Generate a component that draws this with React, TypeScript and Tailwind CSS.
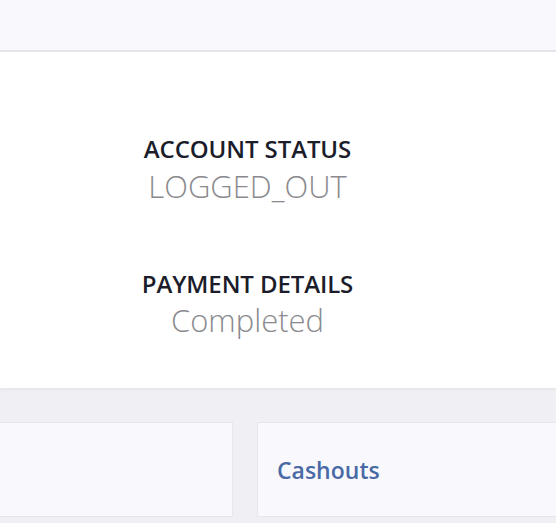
import React from 'react';

const StatusItem: React.FC<{ label: string; value: string; gap: string }> = ({ label, value, gap }) => (
  <div className={`flex flex-col items-center ${gap}`}>
    <h3 className="text-[24px] leading-[24px] font-semibold text-[#1b1d2a] tracking-[-0.1px]">{label}</h3>
    <p className="text-[31px] leading-[30px] font-light text-[#8a8a8e]">{value}</p>
  </div>
);

const App: React.FC = () => {
  return (
    <div className="min-h-screen bg-[#efeff4] font-['Open_Sans',sans-serif] overflow-hidden">
      {/* Top bar */}
      <div className="h-[52px] bg-[#f9f9fd] border-b-2 border-[#e4e4ea]"></div>

      {/* Account panel */}
      <div className="bg-white h-[336px] pr-[61px] pt-[85px] flex flex-col gap-[71px] shadow-[0_2px_3px_rgba(0,0,0,0.04)]">
        <StatusItem label="ACCOUNT STATUS" value="LOGGED_OUT" gap="gap-[10px]" />
        <StatusItem label="PAYMENT DETAILS" value="Completed" gap="gap-[9px]" />
      </div>

      {/* Cards */}
      <div className="flex gap-[24px] pt-[34px] mr-[-40px]">
        <div className="w-[233px] h-[95px] bg-[#f9f9fd] border border-[#e6e6ec] border-l-0"></div>
        <div className="flex-1 h-[95px] bg-[#f9f9fd] border border-[#e6e6ec] flex items-center px-[19px]">
          <span className="text-[23px] leading-[30px] font-semibold text-[#4a6aa6]">Cashouts</span>
        </div>
      </div>
    </div>
  );
};

export default App;
